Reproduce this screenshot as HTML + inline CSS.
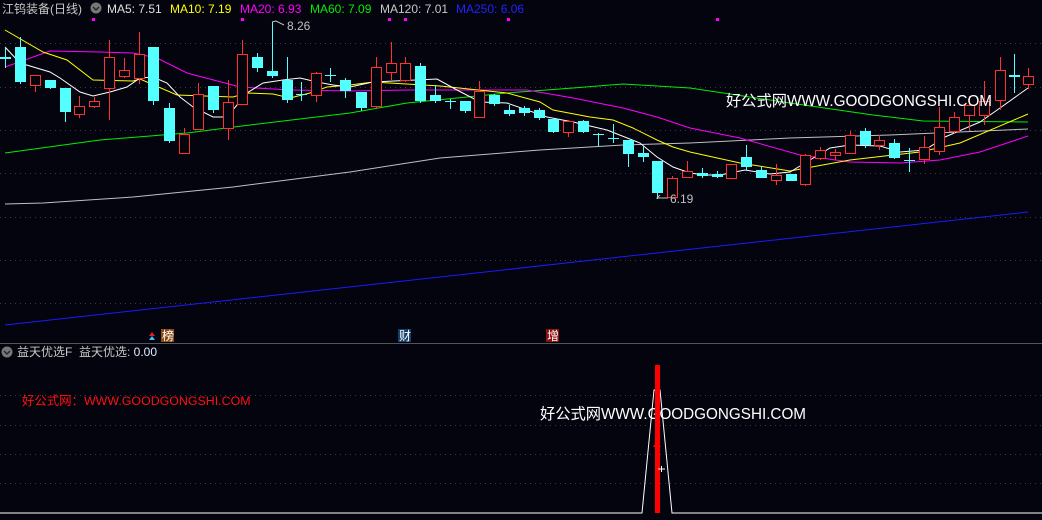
<!DOCTYPE html>
<html><head><meta charset="utf-8"><style>
html,body{margin:0;padding:0;background:#04040e;width:1042px;height:520px;overflow:hidden}
svg{display:block}
text{font-family:"Liberation Sans","Noto Sans CJK SC",sans-serif}
</style></head><body>
<svg id="s" width="1042" height="520" xmlns="http://www.w3.org/2000/svg">
<rect width="1042" height="520" fill="#04040e"/>
<g stroke="#3a3a44" stroke-dasharray="1,4" stroke-width="1">
<line x1="0" x2="1042" y1="43.5" y2="43.5"/><line x1="0" x2="1042" y1="87.5" y2="87.5"/>
<line x1="0" x2="1042" y1="130.5" y2="130.5"/><line x1="0" x2="1042" y1="173.5" y2="173.5"/>
<line x1="0" x2="1042" y1="217.5" y2="217.5"/><line x1="0" x2="1042" y1="260.5" y2="260.5"/>
<line x1="0" x2="1042" y1="303.5" y2="303.5"/>
<line x1="0" x2="1042" y1="395.5" y2="395.5"/><line x1="0" x2="1042" y1="425.5" y2="425.5"/>
<line x1="0" x2="1042" y1="454.5" y2="454.5"/><line x1="0" x2="1042" y1="483.5" y2="483.5"/>
</g>
<line x1="0" x2="1042" y1="343.5" y2="343.5" stroke="#555" stroke-width="1"/>
<g fill="none" stroke-width="1">
<polyline stroke="#1a1aff" points="5,325 1028,212"/>
<polyline stroke="#c0c0c0" points="5,204 43,203 133,197 233,187 350,172 440,158 540,150 623,145 690,143 790,138 890,135 1028,129"/>
<polyline stroke="#00ee00" points="5,153 100,140 187,133 250,125 350,113 407,103 507,93 573,88 623,84 657,86 690,88 790,103 873,115 923,121 1028,122"/>
<polyline stroke="#ff00ff" points="5,67 50,51 100,52 133,53 157,58 187,73 240,87 290,90 350,91 407,90 527,90 573,98 623,108 657,117 690,128 740,138 800,155 850,162 900,163 940,160 980,152 1028,136"/>
<polyline stroke="#ffff00" points="5,30 43,52 67,60 93,80 133,81 140,79 177,95 233,97 247,93 273,94 290,98 310,93 327,87 350,85 373,82 440,86 507,93 540,102 553,110 590,117 613,120 633,128 657,140 673,147 690,152 740,163 790,171 850,160 920,152 960,143 1028,114"/>
<polyline stroke="#ffffff" points="5,47 20,63 50,72 60,78 80,92 93,96 110,92 127,87 140,78 153,77 167,83 180,97 193,107 213,117 227,117 247,93 263,83 283,80 300,78 317,82 333,85 350,87 373,82 437,79 457,90 480,102 507,103 547,117 573,122 607,130 640,143 657,157 673,167 690,173 705,175 720,175 745,170 770,174 790,172 810,160 830,148 850,145 880,146 900,152 925,150 945,137 980,122 1000,108 1028,88"/>
</g>
<g id="c"></g>
<g fill="#ff00ff"><rect x="92" y="18" width="3" height="3"/><rect x="241" y="18" width="3" height="3"/><rect x="388" y="18" width="3" height="3"/><rect x="404" y="18" width="3" height="3"/><rect x="507" y="18" width="3" height="3"/><rect x="716" y="18" width="3" height="3"/></g>
<text x="2" y="13" font-size="12" fill="#c8c8c8">江钨装备(日线)</text>
<circle cx="96" cy="8" r="5.5" fill="#777"/><path d="M93 7 L96 10 L99 7" stroke="#222" fill="none" stroke-width="1.3"/>
<text x="107" y="13" font-size="12" fill="#e0e0e0">MA5: 7.51</text>
<text x="170" y="13" font-size="12" fill="#ffff00">MA10: 7.19</text>
<text x="240" y="13" font-size="12" fill="#ff00ff">MA20: 6.93</text>
<text x="310" y="13" font-size="12" fill="#00ee00">MA60: 7.09</text>
<text x="380" y="13" font-size="12" fill="#c8c8c8">MA120: 7.01</text>
<text x="456" y="13" font-size="12" fill="#2222ff">MA250: 6.06</text>
<path d="M272 22 L276 21 L284 25" stroke="#c0c0c0" fill="none"/>
<text x="287" y="30" font-size="12" fill="#c0c0c0">8.26</text>
<path d="M660 195 L657 198 L668 198" stroke="#c0c0c0" fill="none"/>
<text x="670" y="203" font-size="12" fill="#c0c0c0">6.19</text>
<text x="726" y="106" font-size="15.25" fill="#ffffff">好公式网WWW.GOODGONGSHI.COM</text>
<path d="M149 336 L152 332 L155 336 Z" fill="#e02020"/><path d="M149 340 L152 336 L155 340 Z" fill="#40c0ff"/>
<rect x="161" y="329" width="13" height="13" fill="#8b4a12"/><text x="162" y="340" font-size="12" fill="#fff">榜</text>
<rect x="398" y="329" width="13" height="13" fill="#13406b"/><text x="399" y="340" font-size="12" fill="#fff">财</text>
<rect x="546" y="329" width="13" height="13" fill="#8a0e0e"/><text x="547" y="340" font-size="12" fill="#fff">增</text>
<circle cx="7" cy="352" r="5.5" fill="#777"/><path d="M4 351 L7 354 L10 351" stroke="#222" fill="none" stroke-width="1.3"/>
<text x="17" y="356" font-size="12" fill="#c8c8c8">益天优选F&#160;&#160;益天优选: <tspan fill="#ddeeff">0.00</tspan></text>
<text x="22" y="405" font-size="12.4" fill="#ff1010">好公式网：WWW.GOODGONGSHI.COM</text>
<text x="540" y="419" font-size="15.25" fill="#ffffff">好公式网WWW.GOODGONGSHI.COM</text>
<polyline fill="none" stroke="#ffffff" stroke-width="1" points="0,513 642,513 654,390 660,390 672,513 1042,513"/>
<rect x="655" y="365" width="5" height="148" fill="#ff0000"/>
<path d="M653 447 L657 441 L661 447 Z" fill="#ff0000"/>
<path d="M658 469 H665 M661.5 466 V472" stroke="#fff"/>
</svg>
<script>
var d=[[5,57,59,47,68,'c'],[20,47,82,37,84,'c'],[35,75,85,75,92,'r'],[50,80,88,80,89,'c'],[65,88,112,88,122,'c'],[79,106,114,96,118,'r'],[94,101,106,97,108,'r'],[109,57,88,40,120,'r'],[124,70,76,58,78,'r'],[139,54,78,32,84,'r'],[153,47,101,47,105,'c'],[169,108,141,103,143,'c'],[184,134,153,128,154,'r'],[198,94,129,83,130,'r'],[213,86,110,86,113,'c'],[228,102,128,80,140,'r'],[242,54,104,40,104,'r'],[257,57,68,53,72,'c'],[272,71,76,22,78,'c'],[287,80,100,57,103,'c'],[301,94,95,82,101,'c'],[316,73,95,72,102,'r'],[330,75,76,68,82,'c'],[345,80,91,78,98,'c'],[361,92,108,92,111,'c'],[376,67,106,57,108,'r'],[391,63,72,42,80,'r'],[405,63,80,57,82,'r'],[420,66,101,63,103,'c'],[435,95,101,85,103,'c'],[450,101,102,99,109,'c'],[465,101,111,101,113,'c'],[479,91,117,81,117,'r'],[494,95,104,94,106,'c'],[509,110,114,105,116,'c'],[524,108,113,106,116,'c'],[539,110,118,108,120,'c'],[553,119,132,119,133,'c'],[568,121,132,121,137,'r'],[583,121,132,120,133,'c'],[598,134,135,133,146,'c'],[613,138,139,124,143,'c'],[628,140,154,140,167,'c'],[643,153,157,146,162,'c'],[657,161,193,161,199,'c'],[672,178,197,176,198,'r'],[687,171,177,161,177,'r'],[702,173,176,168,178,'c'],[717,174,177,171,178,'c'],[731,164,178,164,178,'r'],[746,157,167,145,171,'c'],[761,170,178,166,178,'c'],[776,175,180,164,185,'r'],[791,174,181,174,181,'c'],[805,155,184,154,186,'r'],[820,150,158,147,160,'r'],[835,152,155,149,160,'r'],[850,135,153,131,154,'r'],[865,131,145,128,148,'c'],[879,140,145,135,150,'r'],[894,143,158,139,159,'c'],[909,160,161,148,172,'c'],[924,147,159,136,164,'r'],[939,127,151,107,155,'r'],[954,117,131,112,134,'r'],[969,105,115,96,131,'r'],[984,101,115,81,125,'r'],[1000,70,100,57,110,'r'],[1014,75,77,54,93,'c'],[1028,76,84,68,89,'r']];
var h='';d.forEach(function(a){var x=a[0],col=a[5]=='r'?'#ff3030':'#54ffff';
h+='<line x1="'+(x+.5)+'" x2="'+(x+.5)+'" y1="'+a[3]+'" y2="'+a[4]+'" stroke="'+col+'"/>';
if(a[5]=='r')h+='<rect x="'+(x-4.5)+'" y="'+(a[1]+.5)+'" width="10" height="'+Math.max(a[2]-a[1],1)+'" fill="#04040e" stroke="'+col+'"/>';
else h+='<rect x="'+(x-5)+'" y="'+a[1]+'" width="11" height="'+Math.max(a[2]-a[1],1)+'" fill="'+col+'"/>';});
document.getElementById('c').innerHTML=h;
</script>
</body></html>
